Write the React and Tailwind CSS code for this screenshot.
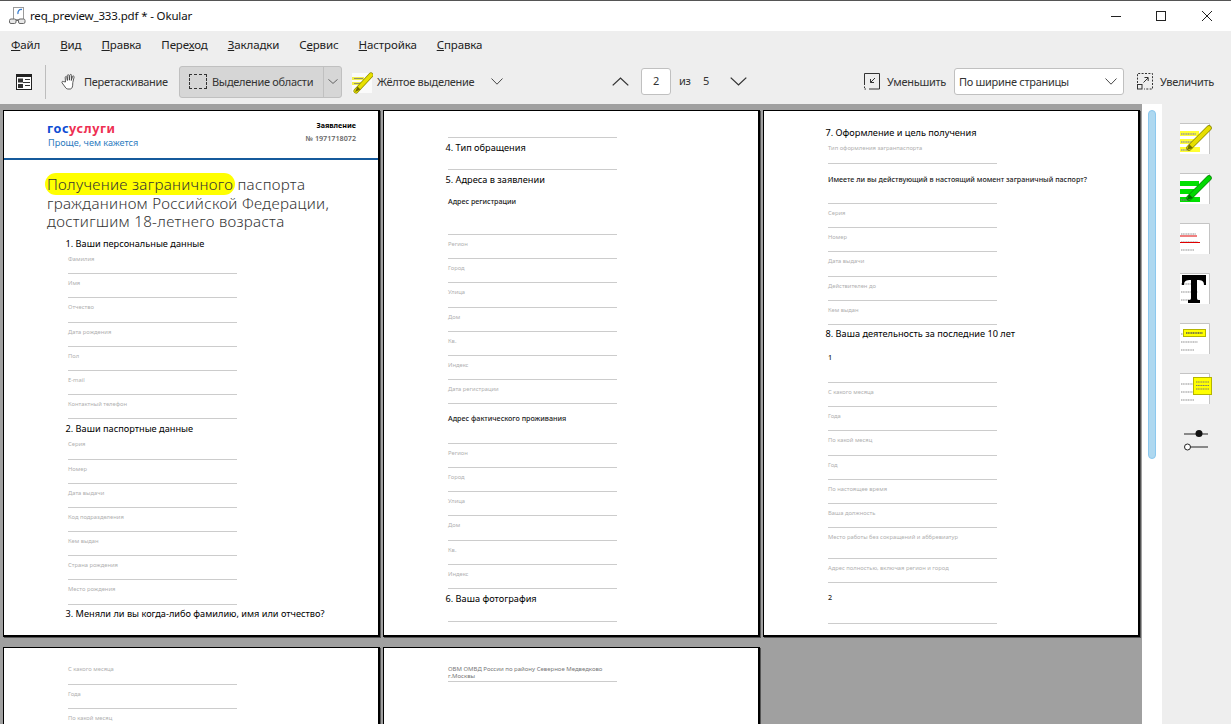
import React from "react";

const UI = "font-['Open_Sans','Noto_Sans',sans-serif]";

function Field({ label, h = "h-[24.2px]", pt = "pt-[5px]" }) {
  return (
    <div className={`${h} ${pt} w-[169px] shrink-0 border-b border-[#cccccc] text-[5.8px] leading-[8px] text-[#b0b0b0] whitespace-nowrap`}>
      {label}
    </div>
  );
}
function Heading({ children }) {
  return (
    <div className="h-[16px] shrink-0 -ml-[2.5px] flex items-end pb-[0.5px] whitespace-nowrap text-[9.2px] leading-[12px] text-black">
      <span>{children}</span>
    </div>
  );
}
function Sub({ h, pt, children }) {
  return (
    <div className={`${h} ${pt} w-[169px] shrink-0 whitespace-nowrap border-b border-[#cccccc] text-[7.15px] leading-[8px] font-medium text-[#222222]`}>
      {children}
    </div>
  );
}
function Page({ children, cls = "h-[527px]" }) {
  return (
    <div className={`${cls} w-[377px] shrink-0 overflow-hidden border-t border-l border-r-2 border-black bg-white shadow-[1px_1px_0_#555555] font-['Open_Sans',sans-serif]`}>
      {children}
    </div>
  );
}

function Page1() {
  const a = ["Фамилия", "Имя", "Отчество", "Дата рождения", "Пол", "E-mail", "Контактный телефон"];
  const b = ["Серия", "Номер", "Дата выдачи", "Код подразделения", "Кем выдан", "Страна рождения", "Место рождения"];
  return (
    <Page cls="h-[527px] border-b-2">
      <div className="h-[49px] border-b-2 border-[#155a9c] flex justify-between pl-[43px] pr-[22px]">
        <div className="pt-[10px]">
          <div className="text-[12.6px] leading-[15px] font-bold tracking-[0.6px]">
            <span className="text-[#0d4cd3]">гос</span>
            <span className="text-[#ee2f53]">услуги</span>
          </div>
          <div className="ml-[1px] mt-[1px] text-[9.1px] leading-[11px] text-[#2c7bc0]">Проще, чем кажется</div>
        </div>
        <div className="pt-[10px] text-right">
          <div className="text-[7.2px] leading-[8px] font-bold text-black">Заявление</div>
          <div className="mt-[5px] text-[7.2px] leading-[8px] font-semibold text-[#666666]">№ 1971718072</div>
        </div>
      </div>
      <div className="h-[74px] pl-[43px] pt-[15px] text-[15.1px] leading-[18.5px] font-light tracking-[0.3px] text-[#333333] whitespace-nowrap">
        <div>
          <span className="bg-[#ffff00] rounded-full px-[2px] py-[1px] -mx-[2px]">Получение заграничного</span> паспорта
        </div>
        <div>гражданином Российской Федерации,</div>
        <div>достигшим 18-летнего возраста</div>
      </div>
      <div className="pl-[64px] flex flex-col">
        <Heading>1. Ваши персональные данные</Heading>
        {a.map((t) => <Field key={t} label={t} />)}
        <Heading>2. Ваши паспортные данные</Heading>
        {b.map((t) => <Field key={t} label={t} />)}
        <Heading>3. Меняли ли вы когда-либо фамилию, имя или отчество?</Heading>
      </div>
    </Page>
  );
}

function Page2() {
  const a = ["Регион", "Город", "Улица", "Дом", "Кв.", "Индекс", "Дата регистрации"];
  const b = ["Регион", "Город", "Улица", "Дом", "Кв.", "Индекс"];
  return (
    <Page cls="h-[527px] border-b-2">
      <div className="pl-[64px] flex flex-col">
        <Field h="h-[27px]" pt="pt-0" />
        <Heading>4. Тип обращения</Heading>
        <Field h="h-[16px]" pt="pt-0" />
        <Heading>5. Адреса в заявлении</Heading>
        <Sub h="h-[49px]" pt="pt-[11px]">Адрес регистрации</Sub>
        {a.map((t) => <Field key={t} label={t} />)}
        <Sub h="h-[39.6px]" pt="pt-[10px]">Адрес фактического проживания</Sub>
        {b.map((t) => <Field key={t} label={t} />)}
        <Heading>6. Ваша фотография</Heading>
        <Field h="h-[17px]" pt="pt-0" />
      </div>
    </Page>
  );
}

function Page3() {
  const a = ["Серия", "Номер", "Дата выдачи", "Действителен до", "Кем выдан"];
  const b = ["С какого месяца", "Года", "По какой месяц", "Год", "По настоящее время", "Ваша должность"];
  return (
    <Page cls="h-[527px] border-b-2">
      <div className="pl-[64px] pt-[12px] flex flex-col">
        <Heading>7. Оформление и цель получения</Heading>
        <Field h="h-[25px]" label="Тип оформления загранпаспорта" />
        <Sub h="h-[40px]" pt="pt-[11px]">Имеете ли вы действующий в настоящий момент заграничный паспорт?</Sub>
        {a.map((t) => <Field key={t} label={t} />)}
        <Heading>8. Ваша деятельность за последние 10 лет</Heading>
        <Sub h="h-[42px]" pt="pt-[12px]">1</Sub>
        {b.map((t) => <Field key={t} label={t} />)}
        <Field h="h-[31px]" pt="pt-[5px]" label="Место работы без сокращений и аббревиатур" />
        <Field label="Адрес полностью, включая регион и город" />
        <Sub h="h-[41px]" pt="pt-[10px]">2</Sub>
      </div>
    </Page>
  );
}

function Page4() {
  return (
    <Page cls="h-[77px]">
      <div className="pl-[64px] flex flex-col">
        <Field h="h-[37px]" pt="pt-[17px]" label="С какого месяца" />
        <Field label="Года" />
        <Field label="По какой месяц" />
      </div>
    </Page>
  );
}
function Page5() {
  return (
    <Page cls="h-[77px]">
      <div className="pl-[64px] pt-[18px]">
        <div className="w-[169px] border-b border-[#cccccc] pb-[1px] text-[6px] leading-[7px] text-[#777777] whitespace-nowrap">
          <div>ОВМ ОМВД России по району Северное Медведково</div>
          <div>г.Москвы</div>
        </div>
      </div>
    </Page>
  );
}

const Ch = ({ up, w = 12, h = 7, stroke = "#333333" }) => (
  <svg width={w} height={h} viewBox="0 0 12 7" fill="none" stroke={stroke} strokeWidth="0.9" preserveAspectRatio="none">
    <path d={up ? "M0.5 6.5L6 0.8L11.5 6.5" : "M0.5 0.5L6 6.2L11.5 0.5"} />
  </svg>
);

function PagesIcon() {
  return (
    <svg width="16" height="16" viewBox="0 0 16 16">
      <rect x="0.5" y="0.5" width="15" height="15" fill="#fff" stroke="#222" />
      <rect x="1" y="1" width="14" height="2" fill="#222" />
      <rect x="2" y="4.5" width="5" height="4" fill="#333" />
      <rect x="2" y="10" width="5" height="4" fill="#333" />
      <path d="M7 8.5L11 8.5M9 5.5H14M9 8.5H14M9 11.5H14" stroke="#333" fill="none" />
    </svg>
  );
}
function HandIcon() {
  return (
    <svg width="17" height="17" viewBox="0 0 17 17" fill="#fff" stroke="#333" strokeWidth="0.8" strokeLinejoin="round">
      <path d="M4.5 9L4.2 4.5C4.1 3.3 5.7 3.2 5.9 4.4L6.4 7.5L6.3 2.6C6.3 1.4 8 1.4 8.1 2.6L8.4 7.2L8.9 2.2C9.1 1 10.7 1.2 10.6 2.5L10.3 7.5L11.5 3.6C11.9 2.5 13.4 3 13.1 4.1L11.8 9.5L11.6 12.8C11.4 14.5 10.4 16 9.4 16H6.8C5.4 16 4.4 14.5 3.4 13L1.1 9.9C0.5 8.8 1.6 7.7 2.6 8.6Z" />
    </svg>
  );
}
function PenYellow() {
  return (
    <svg width="22" height="24" viewBox="0 0 22 24">
      <rect x="1" y="3" width="20" height="20" fill="#fbfbfb" />
      <rect x="1" y="7" width="12" height="3" fill="#f2ef4a" />
      <rect x="1" y="12" width="9" height="3" fill="#f2ef4a" />
      <path d="M3 8.5H12M3 13.5H9" stroke="#777" strokeWidth="0.8" />
      <path d="M5 21L20 5" stroke="#8c8a00" strokeWidth="5" strokeLinecap="round" />
      <path d="M5 21L20 5" stroke="#e8e000" strokeWidth="3.6" strokeLinecap="round" />
      <path d="M4 22L6.5 16.5L9.5 19.5Z" fill="#706e00" />
    </svg>
  );
}
function Thumb({ children, lines = true }) {
  return (
    <svg className="overflow-visible" width="30" height="32" viewBox="0 0 30 32">
      <rect x="0" y="1" width="29" height="30" fill="#ffffff" />
      <path d="M0 0.5H29.5V31" fill="none" stroke="#c4c4c4" />
      {lines && (
        <g stroke="#b4b4b4" strokeWidth="1.6" strokeDasharray="1.2 0.5" fill="none">
          <path d="M1 11H16M1 19H18M1 27H14" />
        </g>
      )}
      {children}
    </svg>
  );
}
function SideIcons() {
  return (
    <div className="w-[69px] shrink-0 bg-[#eeeeee] flex flex-col items-start pl-[18px] pt-[19px] gap-[18px]">
      <Thumb>
        <rect x="0" y="8" width="19" height="5" fill="#ffff33" />
        <rect x="0" y="16" width="17" height="5" fill="#ffff33" />
        <rect x="0" y="24" width="20" height="5" fill="#ffff33" />
        <path d="M1 11H16M1 19H16M1 27H10" stroke="#999" strokeWidth="1.4" strokeDasharray="1.2 0.5" />
        <path d="M9 25L29 5" stroke="#8c8a00" strokeWidth="5.5" strokeLinecap="round" />
        <path d="M9 25L29 5" stroke="#e6de00" strokeWidth="4" strokeLinecap="round" />
        <path d="M7 27L9 21L13 25Z" fill="#706e00" />
      </Thumb>
      <Thumb lines={false}>
        <rect x="0" y="8" width="19" height="5" fill="#00e000" />
        <rect x="0" y="16" width="17" height="5" fill="#00e000" />
        <rect x="0" y="24" width="20" height="5" fill="#00e000" />
        <path d="M1 27H10" stroke="#777" strokeWidth="1.4" strokeDasharray="1.2 0.5" />
        <path d="M9 25L29 5" stroke="#0a8a0a" strokeWidth="5.5" strokeLinecap="round" />
        <path d="M9 25L29 5" stroke="#00d800" strokeWidth="4" strokeLinecap="round" />
        <path d="M7 27L9 21L13 25Z" fill="#007000" />
      </Thumb>
      <Thumb>
        <path d="M0 13H17M0 19.5H20" stroke="#e00000" strokeWidth="1" />
      </Thumb>
      <Thumb>
        <path d="M2 2H26V12H24C24 8 22 7 17 7V25C17 27 18 27 20 27V30H8V27C10 27 11 27 11 25V7C6 7 4 8 4 12H2Z" fill="#000" />
      </Thumb>
      <Thumb>
        <rect x="3.5" y="6.5" width="22" height="7" fill="#ffff00" stroke="#b5b500" />
        <path d="M6 10H23" stroke="#555" strokeWidth="1.4" strokeDasharray="1.2 0.5" />
      </Thumb>
      <Thumb>
        <rect x="13.5" y="4.5" width="18" height="17" fill="#ffff00" stroke="#b5b500" />
        <path d="M16 9H29M16 12.5H29M16 16H29" stroke="#777" strokeWidth="1" strokeDasharray="1.2 0.5" />
      </Thumb>
      <div className="ml-[4px] mt-[5px]">
        <svg width="25" height="24" viewBox="0 0 25 24">
          <path d="M0 6H24" stroke="#222" strokeWidth="1" />
          <circle cx="15" cy="5.5" r="3.5" fill="#111" />
          <path d="M6 19H24" stroke="#222" strokeWidth="1" />
          <circle cx="3.5" cy="19" r="3" fill="#fff" stroke="#222" />
        </svg>
      </div>
    </div>
  );
}

function Toolbar() {
  return (
    <div className="h-[45px] shrink-0 flex items-center text-[11px] tracking-[-0.3px] text-[#333333] bg-[#eeeeee] whitespace-nowrap">
      <div className="ml-[16px] mt-[1px] flex"><PagesIcon /></div>
      <div className="ml-[13px] h-[34px] w-px bg-[#bdbdbd]" />
      <div className="ml-[15px] flex"><HandIcon /></div>
      <span className="ml-[6px] w-[84px] pt-[1px]">Перетаскивание</span>
      <div className="ml-[11px] h-[32px] w-[163px] flex items-center rounded-[3px] border border-[#c0c0c0] bg-[#d6d6d6]">
        <div className="ml-[9px] h-[15px] w-[18px] border border-dashed border-[#333333]" />
        <span className="ml-[5px] w-[111px] pt-[1px]">Выделение области</span>
        <div className="h-full w-px bg-[#c0c0c0]" />
        <div className="flex flex-1 justify-center"><Ch w={10} h={5} /></div>
      </div>
      <div className="ml-[9px] flex"><PenYellow /></div>
      <span className="ml-[4px] w-[102px] pt-[1px]">Жёлтое выделение</span>
      <div className="ml-[12px] flex"><Ch /></div>
      <div className="ml-[109px] flex"><Ch up w={17} h={9} /></div>
      <div className="ml-[12px] h-[27px] w-[30px] rounded-[3px] border border-[#c0c0c0] bg-white flex items-center justify-center">2</div>
      <span className="ml-[8px] w-[12px]">из</span>
      <span className="ml-[12px] w-[6px]">5</span>
      <div className="ml-[21px] flex"><Ch w={17} h={9} /></div>
      <div className="ml-[117px] flex">
        <svg width="16" height="17" viewBox="0 0 16 17" fill="none" stroke="#333" strokeWidth="1">
          <path d="M0.5 12V0.5H15.5V16H5" />
          <path d="M0.5 13.5V16H3" strokeDasharray="1.5 1" />
          <path d="M11 5L6.5 9.5M6.5 6V9.5H10" />
        </svg>
      </div>
      <span className="ml-[7px] w-[57px] pt-[1px]">Уменьшить</span>
      <div className="ml-[10px] h-[27px] w-[170px] rounded-[3px] border border-[#c0c0c0] bg-white flex items-center justify-between pl-[4px] pr-[6px]">
        <span className="pt-[1px]">По ширине страницы</span>
        <Ch />
      </div>
      <div className="ml-[13px] flex">
        <svg width="16" height="17" viewBox="0 0 16 17" fill="none" stroke="#333" strokeWidth="1">
          <path d="M0.5 10V0.5H15.5V16H7" strokeDasharray="2 1.4" />
          <rect x="0.5" y="11.5" width="4.5" height="4.5" />
          <path d="M6.5 9.5L11 5M7.5 4.5H11.2V8" />
        </svg>
      </div>
      <span className="ml-[7px] pt-[1px]">Увеличить</span>
    </div>
  );
}

function MenuBar() {
  const items = [
    ["", "Ф", "айл"], ["", "В", "ид"], ["", "П", "равка"], ["Пере", "х", "од"],
    ["", "З", "акладки"], ["С", "е", "рвис"], ["", "Н", "астройка"], ["", "С", "правка"],
  ];
  return (
    <div className="h-[28px] shrink-0 bg-[#eeeeee] flex items-center gap-[20px] pl-[11px] text-[11.5px] tracking-[-0.12px] text-[#222222]">
      {items.map(([a, u, b]) => (
        <span key={a + u + b}>{a}<span className="underline">{u}</span>{b}</span>
      ))}
    </div>
  );
}

function TitleBar() {
  return (
    <div className="h-[30px] shrink-0 bg-white flex items-center text-[11.5px] tracking-[-0.15px] text-[#111111]">
      <div className="ml-[9px] flex">
        <svg width="17" height="18" viewBox="0 0 17 18" fill="none">
          <rect x="4.5" y="0.5" width="10" height="12" fill="#fff" stroke="#9a9a9a" />
          <path d="M13 2.5C10 2 8.5 4.5 9 7" stroke="#3b7fd0" strokeWidth="1.3" />
          <rect x="0.5" y="12" width="6.5" height="4.5" rx="1.5" fill="#e8e8e8" stroke="#666" />
          <rect x="9.5" y="12" width="6.5" height="4.5" rx="1.5" fill="#e8e8e8" stroke="#666" />
          <path d="M7 13.5H9.5" stroke="#666" />
        </svg>
      </div>
      <span className="ml-[4px]">req_preview_333.pdf * - Okular</span>
      <div className="ml-auto flex items-center pr-[19px]">
        <div className="h-px w-[10px] bg-[#222222]" />
        <div className="ml-[35px] h-[10px] w-[10px] border border-[#222222]" />
        <svg className="ml-[36px]" width="10" height="10" viewBox="0 0 10 10" stroke="#222" strokeWidth="1">
          <path d="M0 0L10 10M10 0L0 10" />
        </svg>
      </div>
    </div>
  );
}

export default function App() {
  return (
    <div className={`${UI} h-[724px] w-[1231px] overflow-hidden flex flex-col border-t border-[#555555] bg-white`}>
      <TitleBar />
      <MenuBar />
      <Toolbar />
      <div className="flex-1 min-h-0 flex">
        <div className="w-[1142px] shrink-0 bg-[#a0a0a0] pl-[3px] pt-[6px] grid grid-cols-[377px_377px_377px] gap-x-[3px] gap-y-[10px] content-start overflow-hidden">
          <Page1 />
          <Page2 />
          <Page3 />
          <Page4 />
          <Page5 />
        </div>
        <div className="w-[20px] shrink-0 bg-white pl-[6px] pt-[6px]">
          <div className="h-[349px] w-[8px] rounded-full bg-[#aed8f0] border border-[#8cc8ee]" />
        </div>
        <SideIcons />
      </div>
    </div>
  );
}
